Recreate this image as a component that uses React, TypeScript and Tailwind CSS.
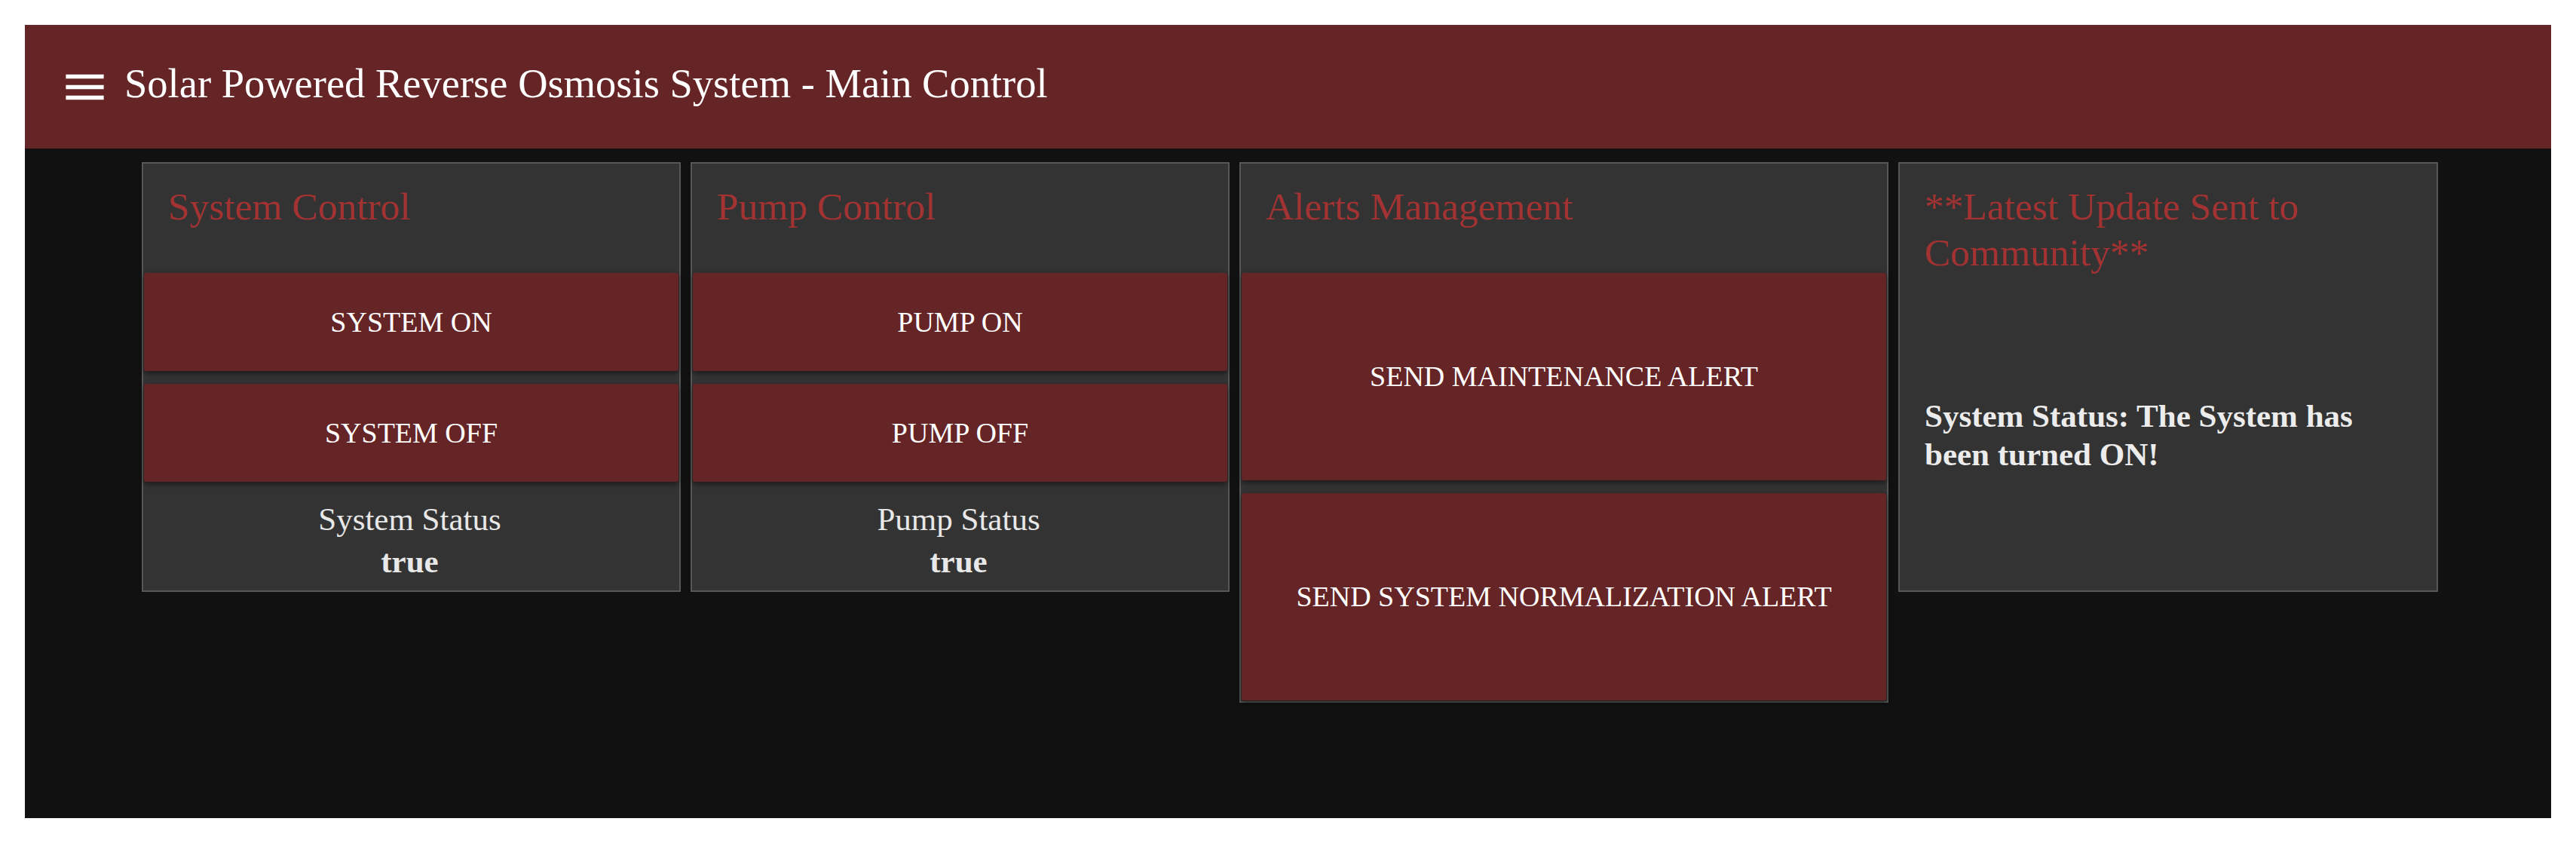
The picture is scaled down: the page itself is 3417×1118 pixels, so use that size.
import React from "react";

function MenuIcon() {
  return (
    <svg viewBox="0 0 24 24" className="w-[67px] h-[67px] fill-white shrink-0">
      <path d="M3 18h18v-2H3v2zm0-5h18v-2H3v2zm0-7v2h18V6H3z" />
    </svg>
  );
}

function CardTitle({ children }: { children: React.ReactNode }) {
  return (
    <div className="pl-[32px] pr-[20px] pt-[26px] text-[51.5px] leading-[61px] text-[#a33333]">
      {children}
    </div>
  );
}

function ActionButton({ label, tall }: { label: string; tall?: boolean }) {
  return (
    <button
      className={
        (tall ? "h-[275px] " : "h-[130px] ") +
        "w-full rounded-[3px] bg-[#652426] text-[38px] uppercase text-white shadow-[0_3px_7px_rgba(0,0,0,0.5)]"
      }
    >
      {label}
    </button>
  );
}

function ControlCard({ title, on, off, statusLabel, status }: { title: string; on: string; off: string; statusLabel: string; status: string }) {
  return (
    <div className="w-[715px] h-[570px] border-2 border-[#575757] bg-[#333] px-px flex flex-col">
      <div className="h-[145px]">
        <CardTitle>{title}</CardTitle>
      </div>
      <ActionButton label={on} />
      <div className="h-[17px]" />
      <ActionButton label={off} />
      <div className="pt-[22px] pr-[4px] text-center text-[43px] leading-[56px] text-[#e8e8e8]">
        <div>{statusLabel}</div>
        <div className="font-bold">{status}</div>
      </div>
    </div>
  );
}

export default function App() {
  return (
    <div
      className="w-[3417px] h-[1118px] bg-white p-[33px]"
      style={{ fontFamily: '"Liberation Serif", "Times New Roman", serif' }}
    >
      <div className="h-full bg-[#111] flex flex-col">
        <header className="h-[164px] shrink-0 bg-[#652426] flex items-center pl-[46px]">
          <MenuIcon />
          <h1 className="ml-[19px] mb-[8px] text-[54.5px] leading-[52px] text-white">
            Solar Powered Reverse Osmosis System - Main Control
          </h1>
        </header>

        <main className="flex items-start gap-[13px] pl-[155px] pt-[18px]">
          <ControlCard
            title="System Control"
            on="System On"
            off="System Off"
            statusLabel="System Status"
            status="true"
          />
          <ControlCard
            title="Pump Control"
            on="Pump On"
            off="Pump Off"
            statusLabel="Pump Status"
            status="true"
          />

          <div className="w-[861px] border-2 border-[#575757] bg-[#333] px-px pb-px flex flex-col">
            <div className="h-[145px]">
              <CardTitle>Alerts Management</CardTitle>
            </div>
            <ActionButton tall label="Send Maintenance Alert" />
            <div className="h-[17px]" />
            <ActionButton tall label="Send System Normalization Alert" />
          </div>

          <div className="w-[716px] h-[570px] border-2 border-[#575757] bg-[#333] px-px flex flex-col">
            <CardTitle>**Latest Update Sent to Community**</CardTitle>
            <p className="mt-[161px] pl-[32px] pr-[20px] text-[43px] leading-[51px] font-bold text-[#ececec]">
              System Status: The System has been turned ON!
            </p>
          </div>
        </main>
      </div>
    </div>
  );
}
